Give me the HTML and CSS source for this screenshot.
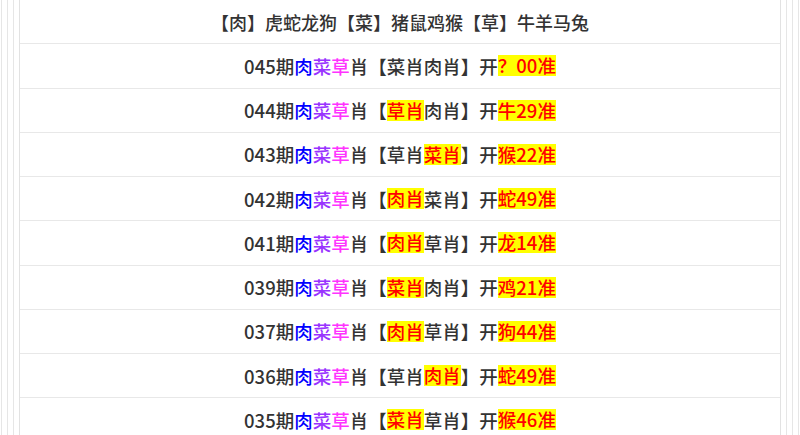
FILE: index.html
```html
<!DOCTYPE html>
<html lang="zh-CN">
<head>
  <meta charset="UTF-8" />
  <meta name="viewport" content="width=device-width, initial-scale=1" />
  <title>肉菜草肖</title>
  <link rel="stylesheet" href="styles.css">
</head>
<body>

  <div class="frame">
    <div class="frame">
      <div class="frame">
        <div class="list">
          <div class="row head">【肉】虎蛇龙狗【菜】猪鼠鸡猴【草】牛羊马兔</div>
          <div class="row">045期<span class="c1">肉</span><span class="c2">菜</span><span class="c3">草</span>肖【菜肖肉肖】开<span class="hit">？00准</span></div>
          <div class="row">044期<span class="c1">肉</span><span class="c2">菜</span><span class="c3">草</span>肖【<span class="hit">草肖</span>肉肖】开<span class="hit">牛29准</span></div>
          <div class="row">043期<span class="c1">肉</span><span class="c2">菜</span><span class="c3">草</span>肖【草肖<span class="hit">菜肖</span>】开<span class="hit">猴22准</span></div>
          <div class="row">042期<span class="c1">肉</span><span class="c2">菜</span><span class="c3">草</span>肖【<span class="hit">肉肖</span>菜肖】开<span class="hit">蛇49准</span></div>
          <div class="row">041期<span class="c1">肉</span><span class="c2">菜</span><span class="c3">草</span>肖【<span class="hit">肉肖</span>草肖】开<span class="hit">龙14准</span></div>
          <div class="row">039期<span class="c1">肉</span><span class="c2">菜</span><span class="c3">草</span>肖【<span class="hit">菜肖</span>肉肖】开<span class="hit">鸡21准</span></div>
          <div class="row">037期<span class="c1">肉</span><span class="c2">菜</span><span class="c3">草</span>肖【<span class="hit">肉肖</span>草肖】开<span class="hit">狗44准</span></div>
          <div class="row">036期<span class="c1">肉</span><span class="c2">菜</span><span class="c3">草</span>肖【草肖<span class="hit">肉肖</span>】开<span class="hit">蛇49准</span></div>
          <div class="row">035期<span class="c1">肉</span><span class="c2">菜</span><span class="c3">草</span>肖【<span class="hit">菜肖</span>草肖】开<span class="hit">猴46准</span></div>
        </div>
      </div>
    </div>
  </div>

</body>
</html>
```

FILE: styles.css
```css
/* page with nested light frames */
body {
  margin: 0;
  padding: 0 1px;
  background: #fff;
  font-family: "Noto Sans CJK SC", "Noto Sans", sans-serif;
  color: #333;
  overflow: hidden;
}

.frame {
  border-left: 1px solid #e6e6e6;
  border-right: 1px solid #e6e6e6;
  padding: 0 5px;
}

.list {
  border-left: 1px solid #e2e2e2;
  border-right: 1px solid #e2e2e2;
}

.row {
  height: 43.25px;
  border-bottom: 1px solid #e8e8e8;
  display: flex;
  align-items: center;
  justify-content: center;
  font-size: 18.5px;
  font-weight: 500;
  white-space: nowrap;
}

.head {
  font-size: 18px;
}

.c1 { color: #0000ff; }
.c2 { color: #9933ff; }
.c3 { color: #ff33ff; }

.hit {
  display: inline-block;
  line-height: 21px;
  background: #ffff00;
  color: #ff0000;
}
```
